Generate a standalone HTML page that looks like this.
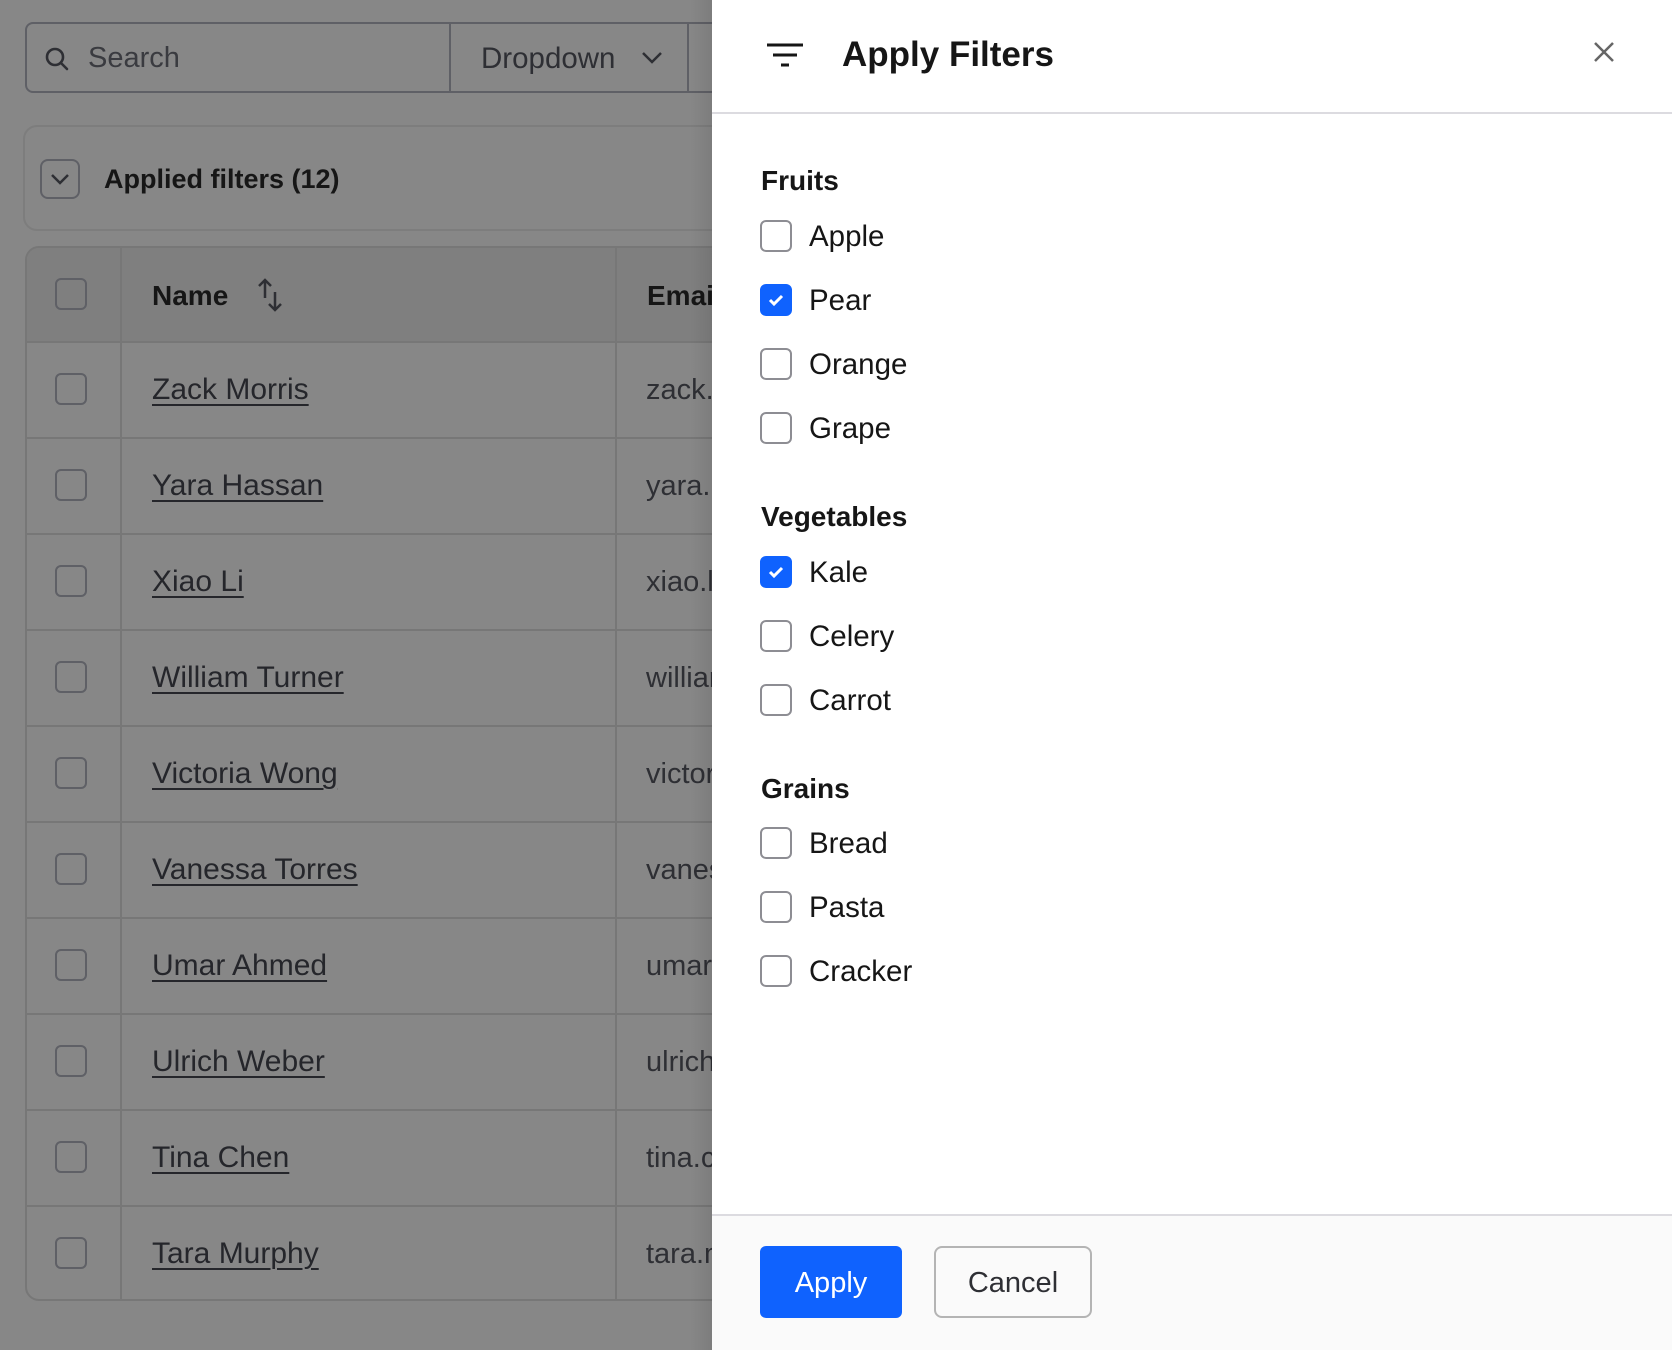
<!DOCTYPE html>
<html><head><meta charset="utf-8"><style>
*{box-sizing:border-box;margin:0;padding:0}
body{width:1672px;height:1350px;overflow:hidden;background:#878787;font-family:"Liberation Sans",sans-serif;color:#25262b;position:relative}
.abs{position:absolute}
.cb{position:absolute;width:32px;height:32px;border:2px solid #5f6066;border-radius:6px}
.row{position:absolute;left:25px;width:700px;height:96px;border-top:2px solid #777}
.name{position:absolute;left:127px;top:30px;font-size:30px;text-decoration:underline;text-underline-offset:5px;text-decoration-thickness:2px;color:#25262b}
.email{position:absolute;left:621px;top:31px;font-size:29px;color:#2e2f34}
.panel{position:absolute;left:712px;top:0;width:960px;height:1350px;background:#fff}
.sec{position:absolute;left:49px;font-size:28px;font-weight:bold;color:#161616}
.item{position:absolute;left:48px;height:32px}
.item .box{position:absolute;left:0;top:0;width:32px;height:32px;border:2px solid #8d8d93;border-radius:6px;background:#fff}
.item .box.on{background:#0f62fe;border-color:#0f62fe}
.item span{position:absolute;left:49px;top:0;font-size:29.5px;white-space:nowrap;color:#161616}
</style></head><body>
<div class="abs" style="left:25px;top:22px;width:700px;height:71px;border:2px solid #5f6066;border-radius:8px"></div>
<div class="abs" style="left:449px;top:22px;width:2px;height:71px;background:#5f6066"></div>
<div class="abs" style="left:687px;top:22px;width:2px;height:71px;background:#5f6066"></div>
<svg class="abs" style="left:44px;top:46px" width="26" height="26" viewBox="0 0 26 26"><circle cx="11" cy="11" r="8" fill="none" stroke="#2e2f34" stroke-width="2.6"/><line x1="17" y1="17" x2="23" y2="23" stroke="#2e2f34" stroke-width="2.6" stroke-linecap="round"/></svg>
<div class="abs" style="left:88px;top:42px;font-size:29px;color:#3a3b40">Search</div>
<div class="abs" style="left:481px;top:42px;font-size:29.5px;color:#2e2f34">Dropdown</div>
<svg class="abs" style="left:640px;top:50px" width="24" height="16" viewBox="0 0 24 16"><path d="M3 3l9 9 9-9" fill="none" stroke="#2e2f34" stroke-width="2.5"/></svg>
<div class="abs" style="left:23px;top:125px;width:720px;height:106px;border:2px solid #7d7d7d;border-radius:14px"></div>
<div class="abs" style="left:40px;top:159px;width:40px;height:40px;border:2px solid #5f6066;border-radius:8px"></div>
<svg class="abs" style="left:48px;top:170px" width="24" height="18" viewBox="0 0 24 18"><path d="M4 5l8 8 8-8" fill="none" stroke="#2e2f34" stroke-width="2.5"/></svg>
<div class="abs" style="left:104px;top:164px;font-size:27px;font-weight:bold;color:#161616">Applied filters (12)</div>
<div class="abs" style="left:25px;top:246px;width:700px;height:1055px;border:2px solid #777;border-radius:14px;overflow:hidden">
  <div class="abs" style="left:0;top:0;width:700px;height:95px;background:#7f7f7f"></div>
</div>
<div class="abs" style="left:120px;top:248px;width:2px;height:1052px;background:#777"></div>
<div class="abs" style="left:615px;top:248px;width:2px;height:1052px;background:#777"></div>
<div class="cb" style="left:55px;top:278px"></div>
<div class="abs" style="left:152px;top:280px;font-size:28px;font-weight:bold;color:#161616">Name</div>
<svg class="abs" style="left:255px;top:276px" width="34" height="38" viewBox="0 0 34 38"><path d="M10 22V4M4 10l6-6 6 6M20 16v18M14 28l6 6 6-6" fill="none" stroke="#2e2f34" stroke-width="2.5"/></svg>
<div class="abs" style="left:647px;top:280px;font-size:28px;font-weight:bold;color:#161616">Email</div>
<div id="rows"></div>
<script>
var n=[["Zack Morris","zack.morris"],["Yara Hassan","yara.hassan"],["Xiao Li","xiao.li"],["William Turner","william"],["Victoria Wong","victoria"],["Vanessa Torres","vanessa"],["Umar Ahmed","umar"],["Ulrich Weber","ulrich"],["Tina Chen","tina.chen"],["Tara Murphy","tara.murphy"]];
var h="";n.forEach(function(r,i){var t=341+i*96;h+='<div class="row" style="top:'+t+'px"><div class="cb" style="left:30px;top:30px"></div><div class="name">'+r[0]+'</div><div class="email">'+r[1]+'</div></div>';});
document.getElementById("rows").innerHTML=h;
</script>
<div class="abs" style="left:690px;top:0;width:22px;height:1350px;background:linear-gradient(to right,rgba(0,0,0,0),rgba(0,0,0,0.08))"></div>
<div class="panel">
  <svg class="abs" style="left:53px;top:42px" width="40" height="28" viewBox="0 0 40 28"><path d="M2 3h36M8 13h24M16 23h8" stroke="#161616" stroke-width="3"/></svg>
  <div class="abs" style="left:130px;top:35px;font-size:35px;font-weight:bold;color:#161616">Apply Filters</div>
  <svg class="abs" style="left:880px;top:40px" width="24" height="24" viewBox="0 0 24 24"><path d="M3 3l18 18M21 3L3 21" stroke="#666" stroke-width="2.5"/></svg>
  <div class="abs" style="left:0;top:112px;width:960px;height:2px;background:#dcdbe0"></div>
  <div class="sec" style="top:165px">Fruits</div>
  <div class="item" style="top:220px"><div class="box"></div><span>Apple</span></div>
  <div class="item" style="top:284px"><div class="box on"><svg width="28" height="28" viewBox="0 0 28 28"><path d="M8 14l4 4 8-8" fill="none" stroke="#fff" stroke-width="3"/></svg></div><span>Pear</span></div>
  <div class="item" style="top:348px"><div class="box"></div><span>Orange</span></div>
  <div class="item" style="top:412px"><div class="box"></div><span>Grape</span></div>
  <div class="sec" style="top:501px">Vegetables</div>
  <div class="item" style="top:556px"><div class="box on"><svg width="28" height="28" viewBox="0 0 28 28"><path d="M8 14l4 4 8-8" fill="none" stroke="#fff" stroke-width="3"/></svg></div><span>Kale</span></div>
  <div class="item" style="top:620px"><div class="box"></div><span>Celery</span></div>
  <div class="item" style="top:684px"><div class="box"></div><span>Carrot</span></div>
  <div class="sec" style="top:773px">Grains</div>
  <div class="item" style="top:827px"><div class="box"></div><span>Bread</span></div>
  <div class="item" style="top:891px"><div class="box"></div><span>Pasta</span></div>
  <div class="item" style="top:955px"><div class="box"></div><span>Cracker</span></div>
  <div class="abs" style="left:0;top:1214px;width:960px;height:136px;background:#fafafa;border-top:2px solid #dcdbe0"></div>
  <div class="abs" style="left:48px;top:1246px;width:142px;height:72px;background:#0f62fe;border-radius:6px;color:#fff;font-size:29px;text-align:center;line-height:74px">Apply</div>
  <div class="abs" style="left:222px;top:1246px;width:158px;height:72px;background:#fafafa;border:2px solid #b4b4b4;border-radius:8px;color:#2e2f34;font-size:29px;text-align:center;line-height:70px">Cancel</div>
</div>
</body></html>
